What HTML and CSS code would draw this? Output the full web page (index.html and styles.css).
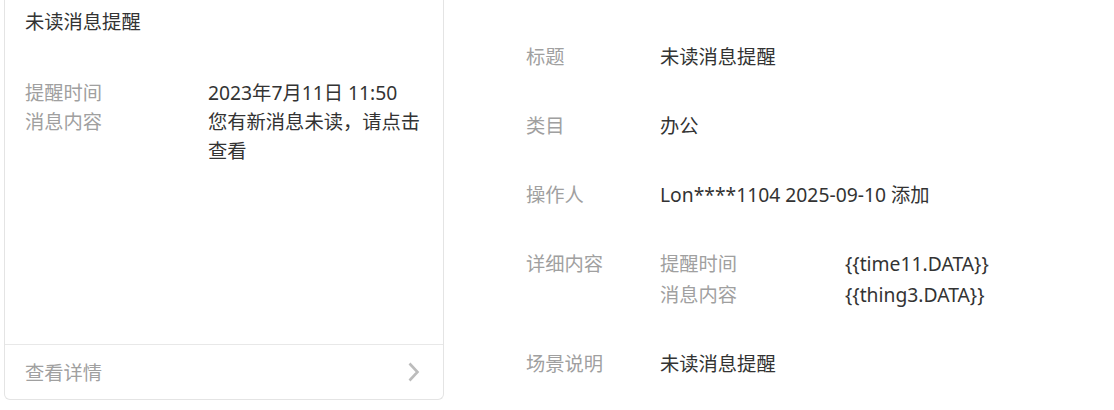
FILE: index.html
```html
<!DOCTYPE html>
<html lang="zh-CN">
<head>
  <meta charset="UTF-8">
  <title>模板详情</title>
  <link rel="stylesheet" href="styles.css">
</head>
<body>

  <div class="page">
    <div class="preview-card">
      <div class="card-body">
        <div class="card-title">未读消息提醒</div>
        <div class="card-fields">
          <div class="field">
            <span class="field-label">提醒时间</span>
            <span class="field-value">2023年7月11日 11:50</span>
          </div>
          <div class="field">
            <span class="field-label">消息内容</span>
            <span class="field-value">您有新消息未读，请点击查看</span>
          </div>
        </div>
      </div>
      <div class="card-footer">
        <span>查看详情</span>
        <svg class="arrow" width="14" height="22" viewBox="0 0 14 22">
          <path d="M2.5 2.5 L10.5 11 L2.5 19.5" fill="none" stroke="#bcbcbc" stroke-width="2.6"/>
        </svg>
      </div>
    </div>

    <div class="info">
      <div class="info-row">
        <div class="info-label">标题</div>
        <div class="info-value">未读消息提醒</div>
      </div>
      <div class="info-row">
        <div class="info-label">类目</div>
        <div class="info-value">办公</div>
      </div>
      <div class="info-row">
        <div class="info-label">操作人</div>
        <div class="info-value">Lon****1104 2025-09-10 添加</div>
      </div>
      <div class="info-row">
        <div class="info-label">详细内容</div>
        <div class="info-value">
          <div class="detail">
            <span class="detail-key">提醒时间</span>
            <span>{{time11.DATA}}</span>
          </div>
          <div class="detail">
            <span class="detail-key">消息内容</span>
            <span>{{thing3.DATA}}</span>
          </div>
        </div>
      </div>
      <div class="info-row">
        <div class="info-label">场景说明</div>
        <div class="info-value">未读消息提醒</div>
      </div>
    </div>
  </div>

</body>
</html>
```

FILE: styles.css
```css
body {
  margin: 0;
  padding: 0;
  background: #fff;
  font-family: "Noto Sans", "Noto Sans CJK SC", sans-serif;
  font-size: 19.3px;
  color: #333;
}

.page {
  display: flex;
  align-items: flex-start;
}

.preview-card {
  margin-left: 4px;
  width: 438px;
  height: 399px;
  border: 1px solid #e4e4e4;
  border-top: none;
  border-radius: 0 0 6px 6px;
  display: flex;
  flex-direction: column;
  background: #fff;
}

.card-body {
  flex: 1;
  padding: 7px 20px 0 20px;
}

.card-title {
  line-height: 30px;
}

.card-fields {
  margin-top: 41px;
}

.field {
  display: flex;
  line-height: 29px;
}

.field-label {
  width: 183px;
  flex-shrink: 0;
  color: #a0a0a0;
}

.field-value {
  width: 216px;
}

.card-footer {
  height: 54px;
  border-top: 1px solid #e8e8e8;
  padding: 0 22px 0 20px;
  display: flex;
  align-items: center;
  justify-content: space-between;
  color: #a0a0a0;
}

.info {
  margin-left: 82px;
  padding-top: 41px;
  display: flex;
  flex-direction: column;
  gap: 38px;
}

.info-row {
  display: flex;
  line-height: 31px;
}

.info-label {
  width: 134px;
  color: #a0a0a0;
}

.detail {
  display: flex;
}

.detail-key {
  width: 185px;
  color: #a0a0a0;
}
```
